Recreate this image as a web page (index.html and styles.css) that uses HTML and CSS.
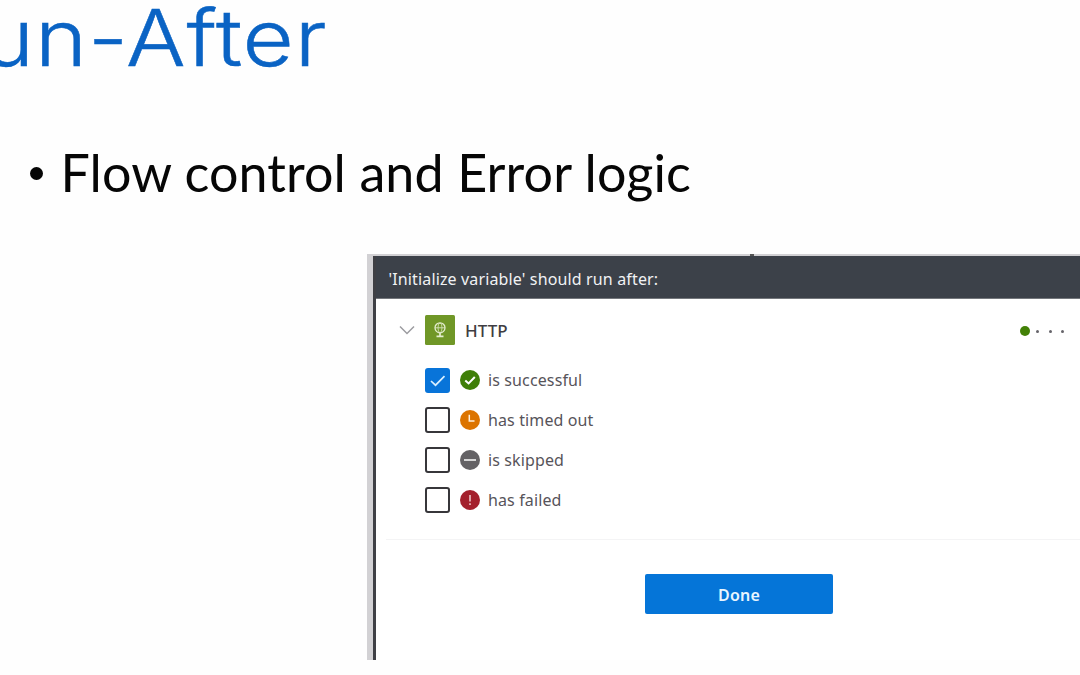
FILE: index.html
```html
<!DOCTYPE html>
<html lang="en">
<head>
<meta charset="utf-8">
<title>Run-After</title>
<link rel="stylesheet" href="styles.css">
</head>
<body>
<main class="slide">
  <h1 class="title"><span class="title-text">un-After</span></h1>
  <ul class="points"><li class="point"><span class="bullet"></span><span class="point-text">Flow control and Error logic</span></li></ul>
  <section class="shot">
    <span class="arrow-tip"></span>
    <div class="panel">
      <header class="panel-head"><span class="head-text">'Initialize variable' should run after:</span></header>
      <div class="action">
        <svg class="chevron" viewBox="0 0 16 10"><path d="M1 1.5 8 8.5 15 1.5"/></svg>
        <svg class="http-icon" viewBox="0 0 30 30"><rect width="30" height="30" rx="1.5" fill="#709727"/><g fill="none" stroke="#e4edcf" stroke-width="1.3"><circle cx="15" cy="12.8" r="5"/><ellipse cx="15" cy="12.8" rx="2" ry="4.8" stroke-width=".7"/><path d="M10 12.8h10" stroke-width=".8"/><path d="M15 18v3.5M11.5 21.3h7" stroke-width="1.7"/></g></svg>
        <span class="action-name">HTTP</span>
        <span class="status"><i class="dot-on"></i><i class="dot"></i><i class="dot"></i><i class="dot"></i></span>
      </div>
      <div class="options">
        <div class="option">
          <span class="box checked"><svg viewBox="0 0 25 25"><path d="M6 13 10.5 17.2 19.5 8.2" fill="none" stroke="#d9efff" stroke-width="1.7"/></svg></span>
          <svg class="state" viewBox="0 0 20 20"><circle cx="10" cy="10" r="10" fill="#3f7f08"/><path d="M5.3 10.4 8.6 13.4 14.8 7" fill="none" stroke="#fff" stroke-width="2"/></svg>
          <span class="label">is successful</span>
        </div>
        <div class="option">
          <span class="box"></span>
          <svg class="state" viewBox="0 0 20 20"><circle cx="10" cy="10" r="10" fill="#dc7400"/><path d="M9.3 4.8V11H14.5" fill="none" stroke="#fff0dc" stroke-width="1.5"/></svg>
          <span class="label">has timed out</span>
        </div>
        <div class="option">
          <span class="box"></span>
          <svg class="state" viewBox="0 0 20 20"><circle cx="10" cy="10" r="10" fill="#646265"/><path d="M4 10H16" stroke="#e5e5e5" stroke-width="1.8"/></svg>
          <span class="label">is skipped</span>
        </div>
        <div class="option">
          <span class="box"></span>
          <svg class="state" viewBox="0 0 20 20"><circle cx="10" cy="10" r="10" fill="#a4202c"/><path d="M10 5V11.5M10 13.3V15" stroke="#f0cdd0" stroke-width="1.5"/></svg>
          <span class="label">has failed</span>
        </div>
      </div>
      <div class="divider"></div>
      <button class="done">Done</button>
    </div>
  </section>
</main>
</body>
</html>
```
FILE: styles.css
```css
* { box-sizing: border-box; }
body { margin: 0; background: #fefefe; overflow: hidden; }
.slide { width: 1080px; height: 675px; overflow: hidden; display: flex; flex-direction: column; }
.title { margin: 0; height: 130px; font: 300 78px/76px Inter, sans-serif; color: #0a63c4; white-space: nowrap; }
.title-text { display: inline-block; margin-left: -18px; letter-spacing: .8px; transform: scaleX(1.135); transform-origin: left; -webkit-text-stroke: .5px #0a63c4; }
.points { list-style: none; margin: 0; padding: 0; height: 124px; }
.point { display: flex; padding: 10px 0 0 30px; font: 400 52px/64px Lato, sans-serif; color: #060606; white-space: nowrap; }
.point-text { letter-spacing: .11px; }
.bullet { width: 13px; height: 13px; margin: 27px 17.5px 0 0; border-radius: 50%; background: #060606; }
.shot { position: relative; margin-left: 367px; width: 713px; height: 406px; padding: 2px 0 0 6px; background: #d2d1d4; }
.arrow-tip { position: absolute; left: 383px; top: 0; width: 4px; height: 2px; background: #555; }
.panel { height: 404px; border-left: 3px solid #3f4045; background: #fff; font-family: "Noto Sans", sans-serif; display: flex; flex-direction: column; }
.panel-head { height: 43px; padding-left: 12.5px; background: #3c4149; border-bottom: 1px solid #74777c; font-size: 16px; line-height: 46px; letter-spacing: .14px; color: #f1f2f4; white-space: nowrap; }
.action { display: flex; align-items: center; height: 62px; padding-left: 23px; }
.chevron { width: 16px; height: 10px; fill: none; stroke: #9c9ca0; stroke-width: 1.5; }
.http-icon { width: 30px; height: 30px; margin: 0 10px; }
.action-name { font-size: 17px; font-weight: 500; color: #3f3d42; letter-spacing: .05px; }
.status { display: flex; align-items: center; margin-left: auto; padding: 2px 16px 0 0; }
.dot-on { width: 10px; height: 10px; border-radius: 50%; background: #438107; margin-right: -3px; }
.dot { width: 3px; height: 3px; margin-left: 9.5px; border-radius: 50%; background: #66646a; }
.options { margin-top: -1px; padding: 0 0 0 49px; height: 179px; }
.option { height: 40px; display: flex; align-items: center; }
.box { width: 25px; height: 26px; border: 2px solid #37363a; border-radius: 3px; background: #fff; }
.checked { height: 25px; border: 0; background: #0874d9; }
.checked svg { display: block; width: 25px; height: 25px; }
.state { width: 20px; height: 20px; margin: 0 8px 0 10px; }
.label { font-size: 16px; line-height: 24px; letter-spacing: .12px; color: #57545a; white-space: nowrap; }
.divider { height: 1px; margin-left: 10px; background: #f4f4f5; }
.done { width: 188px; height: 40px; margin: 34px 0 0 269px; padding: 2px 0 0; border: 0; border-radius: 2px; background: #0575d8; font: 600 16px/38px "Noto Sans", sans-serif; letter-spacing: .2px; color: #e9f5ff; }
```
